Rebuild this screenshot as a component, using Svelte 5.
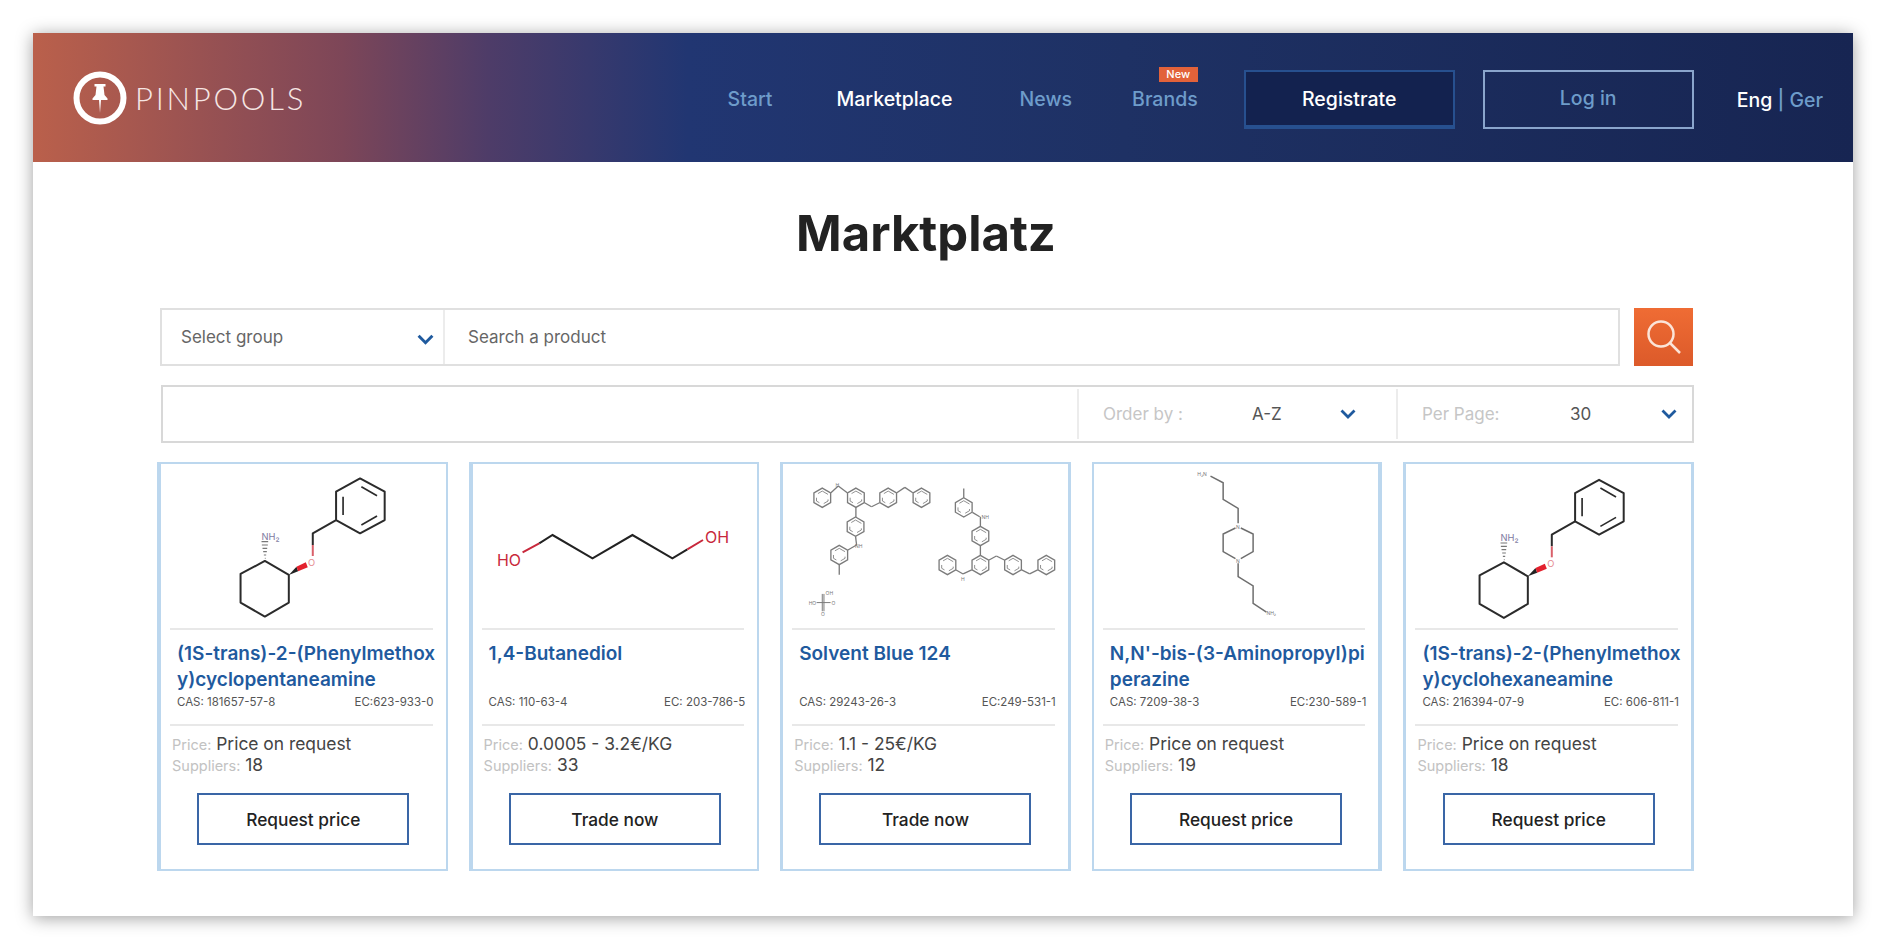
<script>
  const products = [
    { lines: ['(1S-trans)-2-(Phenylmethox', 'y)cyclopentaneamine'], cas: 'CAS: 181657-57-8', ec: 'EC:623-933-0', price: 'Price on request', suppliers: 18, action: 'Request price', mol: 'benzyl', box: '33 42 855 492', edge: 'left' },
    { lines: ['1,4-Butanediol'], cas: 'CAS: 110-63-4', ec: 'EC: 203-786-5', price: '0.0005 - 3.2€/KG', suppliers: 33, action: 'Trade now', mol: 'diol', box: '6 42 855 492', edge: 'left' },
    { lines: ['Solvent Blue 124'], cas: 'CAS: 29243-26-3', ec: 'EC:249-531-1', price: '1.1 - 25€/KG', suppliers: 12, action: 'Trade now', mol: 'blue', box: '39 42 855 492', edge: 'mid' },
    { lines: ["N,N'-bis-(3-Aminopropyl)pi", 'perazine'], cas: 'CAS: 7209-38-3', ec: 'EC:230-589-1', price: 'Price on request', suppliers: 19, action: 'Request price', mol: 'piperazine', box: '12 42 855 492', edge: 'right' },
    { lines: ['(1S-trans)-2-(Phenylmethox', 'y)cyclohexaneamine'], cas: 'CAS: 216394-07-9', ec: 'EC: 606-811-1', price: 'Price on request', suppliers: 18, action: 'Request price', mol: 'benzyl', box: '51 38 855 492', edge: 'mid' }
  ];

  const rings = [[157,143],[258,143],[355,143],[455,143],[257,230],[208,315],[582,172],[632,258],[632,345],[533,345],[730,345],[830,345]];
  const links = [
    [183,128,205,108],[205,108,232,128],[284,158,305,170],[305,170,329,158],[381,128,405,112],[405,112,429,128],
    [258,172,258,201],[257,259,260,285],[260,285,234,300],[208,344,208,374],[582,143,582,115],[608,187,630,200],[632,200,632,229],
    [632,287,632,316],[559,360,580,372],[580,372,606,360],[658,330,680,318],[680,318,704,330],[756,360,780,372],[780,372,804,360]
  ];

  function hex(cx, cy, r = 29) {
    const pts = [];
    for (let i = 0; i < 6; i++) {
      const a = (Math.PI / 3) * i - Math.PI / 2;
      pts.push(`${cx + r * Math.cos(a)},${cy + r * Math.sin(a)}`);
    }
    return pts.join(' ');
  }
</script>

{#snippet chevron()}
  <svg class="chev" viewBox="0 0 16 10" aria-hidden="true"><path d="M1.5 1.500 8 8l6.500-6.500" /></svg>
{/snippet}

{#snippet benzyl()}
  <g fill="none" stroke="#2b2b2b" stroke-width="6" stroke-linejoin="round">
    <polygon points="345,333 417,375 417,458 345,500 272,458 272,372" />
    <polygon points="631,85 705,125 705,210 631,250 559,210 559,125" />
    <path d="M580 140v55M635 110l47 27M635 225l47-27" stroke-width="5" />
    <path d="M489 285V250L559 210" />
    <path d="M489 318V285" stroke="#d9606a" />
    <path d="M345 325h2M342 315h7M340 305h11M338 295h14M336 285h18M335 275h20" stroke="#777" stroke-width="3.500" />
  </g>
  <polygon points="417,375 440,350 445,364" fill="#222" />
  <polygon points="440,350 468,337 474,352 445,364" fill="#e3202c" />
  <text x="475" y="347" class="atom" fill="#e58a90">O</text>
  <text x="335" y="270" class="atom" fill="#7d7aa0">NH₂</text>
{/snippet}

{#snippet diol()}
  <path d="M205 280 245 255 365 325 485 255 605 325 650 298" fill="none" stroke="#222" stroke-width="6" stroke-linejoin="miter" />
  <path d="M155 307 205 280M650 298 697 270" fill="none" stroke="#c8283c" stroke-width="6" />
  <text x="78" y="347" class="oh" fill="#c8283c">HO</text>
  <text x="703" y="279" class="oh" fill="#c8283c">OH</text>
{/snippet}

{#snippet blue()}
  <g class="soft" fill="none" stroke="#7b7b7b" stroke-width="4">
    {#each rings as r}
      <polygon points={hex(r[0], r[1])} />
      <polygon points={hex(r[0], r[1], 20)} stroke-width="2.500" stroke-dasharray="20 15" />
    {/each}
    {#each links as l}
      <line x1={l[0]} y1={l[1]} x2={l[2]} y2={l[3]} />
    {/each}
    <path d="M140 458h42M157 432v52M162 432v52" stroke-width="3" />
  </g>
  <text x="197" y="110" class="tiny">H</text>
  <text x="255" y="294" class="tiny">NH</text>
  <text x="635" y="208" class="tiny">NH</text>
  <text x="574" y="392" class="tiny">H</text>
  <text x="116" y="464" class="tiny">HO</text>
  <text x="167" y="434" class="tiny">OH</text>
  <text x="185" y="464" class="tiny">O</text>
  <text x="153" y="497" class="tiny">O</text>
{/snippet}

{#snippet piperazine()}
  <path class="soft" d="M362 78 400 98V148L445 175V220M445 340V380L490 408V460L530 487M437 234 400 252V305L437 326M453 234 490 252V305L453 326" fill="none" stroke="#6e6e6e" stroke-width="4.500" />
  <text x="322" y="79" class="tiny">H₂N</text>
  <text x="530" y="496" class="tiny">NH₂</text>
  <text x="439" y="236" class="tiny">N</text>
  <text x="439" y="338" class="tiny">N</text>
{/snippet}

<div class="panel">
  <header class="top">
    <a class="logo" href="#home">
      <svg class="mark" viewBox="0 0 54 54" aria-hidden="true">
        <circle cx="27" cy="27" r="23.5" fill="none" stroke="#fff" stroke-width="6" />
        <path d="M21.500 13h11v2.500h-2l1 8.500 3 3.500v1.500h-6.500l-1 13-1-13h-6.500v-1.500l3-3.500 1-8.500h-2z" fill="#fff" />
      </svg>
      <span class="wordmark">PINPOOLS</span>
    </a>
    <nav class="nav">
      <div class="links">
        <a href="#start">Start</a>
        <a href="#market" class="on">Marketplace</a>
        <a href="#news">News</a>
        <a href="#brands" class="brands">Brands<span class="badge">New</span></a>
      </div>
      <div class="auth">
        <a href="#reg" class="btn reg">Registrate</a>
        <a href="#login" class="btn login">Log in</a>
      </div>
      <div class="lang"><b>Eng</b> | Ger</div>
    </nav>
  </header>

  <main class="body">
    <h1>Marktplatz</h1>

    <div class="search">
      <div class="bar">
        <div class="group"><span>Select group</span>{@render chevron()}</div>
        <div class="query">Search a product</div>
      </div>
      <button class="go" aria-label="Search">
        <svg viewBox="0 0 36 36" aria-hidden="true">
          <circle cx="15" cy="15" r="12.500" />
          <path d="m24 24 10 10" />
        </svg>
      </button>
    </div>

    <div class="filters">
      <div class="spacer"></div>
      <div class="filter order"><span class="lab">Order by :</span><span class="val">A-Z</span>{@render chevron()}</div>
      <div class="filter per"><span class="lab">Per Page:</span><span class="val">30</span>{@render chevron()}</div>
    </div>

    <div class="grid">
      {#each products as p}
        <article class="card {p.edge}">
          <svg class="mol" viewBox={p.box} aria-hidden="true">
            {#if p.mol === 'benzyl'}{@render benzyl()}
            {:else if p.mol === 'diol'}{@render diol()}
            {:else if p.mol === 'blue'}{@render blue()}
            {:else}{@render piperazine()}{/if}
          </svg>
          <hr />
          <h2>{#each p.lines as l}<span>{l}</span>{/each}</h2>
          <div class="ids"><span>{p.cas}</span><span>{p.ec}</span></div>
          <hr class="second" />
          <p class="info"><span class="k">Price:</span> {p.price}</p>
          <p class="info"><span class="k">Suppliers:</span> {p.suppliers}</p>
          <a class="cta" href="#item">{p.action}</a>
        </article>
      {/each}
    </div>
  </main>
</div>

<style>
  :global(body) {
    margin: 0;
    background: #fff;
    font-family: Inter, "Liberation Sans", sans-serif;
  }
  a { text-decoration: none; color: inherit; }
  .panel {
    margin: 33px 34px 33px 33px;
    height: 883px;
    background: #fff;
    box-shadow: 0 2px 16px rgba(0, 0, 0, 0.38);
  }
  .top {
    height: 129px;
    display: flex;
    align-items: center;
    justify-content: space-between;
    padding: 0 30px 0 40px;
    background: linear-gradient(90deg, #ba604b 0%, #7d4658 17%, #4e3c68 25%, #213672 36%, #1e3164 60%, #172552 100%);
  }
  .logo { display: flex; align-items: center; gap: 8px; }
  .mark { width: 54px; height: 54px; }
  .wordmark {
    font-family: Lato, sans-serif;
    font-weight: 300;
    font-size: 31px;
    letter-spacing: 2.800px;
    color: #f6e6e4;
  }
  .nav { display: flex; align-items: center; margin-top: 4px; font-size: 19.500px; font-weight: 500; color: #6e9cca; }
  .links { display: flex; gap: 65px; margin-top: -2px; }
  .on { color: #fff; margin: 0 2px 0 -1px; }
  .brands { position: relative; margin-left: -5px; }
  .badge {
    position: absolute;
    right: 0;
    top: -20px;
    width: 39px;
    height: 15px;
    background: #e2623a;
    color: #fff;
    font-size: 11px;
    line-height: 15px;
    text-align: center;
  }
  .auth { display: flex; gap: 28px; margin: 0 43px 0 46px; }
  .btn {
    width: 211px;
    height: 59px;
    box-sizing: border-box;
    display: flex;
    align-items: center;
    justify-content: center;
  }
  .reg {
    background: #13224f;
    border: 2px solid #27508f;
    border-bottom-width: 4px;
    color: #fff;
  }
  .login { border: 2px solid #8aa5cc; padding-bottom: 3px; }
  .lang b { color: #fff; font-weight: 500; }

  .body { padding: 0 159px 0 125px; }
  h1 {
    margin: 42px 0 44px;
    text-align: center;
    font-size: 49px;
    line-height: 60px;
    font-weight: 700;
    color: #222;
  }
  .search { display: flex; gap: 14px; margin: 0 1px 0 2px; height: 58px; }
  .bar {
    flex: 1;
    display: flex;
    box-sizing: border-box;
    border: 2px solid #e0e0e0;
    font-size: 17px;
    color: #666;
  }
  .group {
    width: 283px;
    box-sizing: border-box;
    border-right: 2px solid #ececec;
    padding: 0 9px 0 19px;
    display: flex;
    align-items: center;
    justify-content: space-between;
  }
  .group .chev { width: 17px; height: 11px; margin-top: 4px; }
  .query { padding-left: 23px; display: flex; align-items: center; }
  .go {
    width: 59px;
    padding: 0;
    border: 0;
    background: linear-gradient(180deg, #ef6c34, #dc5a2a);
    display: flex;
    align-items: center;
    justify-content: center;
  }
  .go svg { width: 36px; height: 36px; fill: none; stroke: #fbe4d8; stroke-width: 2.500; }
  .chev { width: 16px; height: 10px; fill: none; stroke: #1f5a9e; stroke-width: 2.800; flex: none; }

  .filters {
    display: flex;
    height: 58px;
    margin: 19px 0 19px 3px;
    box-sizing: border-box;
    border: 2px solid #d8d8d8;
    font-size: 17px;
  }
  .spacer { flex: 1; }
  .filter {
    box-sizing: border-box;
    margin: 2px 0;
    border-left: 2px solid #ececec;
    display: flex;
    align-items: center;
    padding-left: 24px;
    color: #555;
  }
  .order { width: 319px; }
  .per { width: 296px; }
  .lab { color: #c6c6c6; width: 149px; flex: none; }
  .per .lab { width: 148px; }
  .val { flex: 1; }
  .filter .chev { margin-right: 40px; }
  .per .chev { margin-right: 15px; }

  .grid { display: grid; grid-template-columns: repeat(5, 1fr); gap: 21px; margin-left: -1px; }
  .card {
    box-sizing: border-box;
    height: 409px;
    border: 2px solid #bcd7ee;
  }
  .left { border-left-width: 4px; }
  .mid { border-left-width: 3px; border-right-width: 3px; }
  .right { border-right-width: 4px; }
  .mol { display: block; width: 100%; height: 164px; }
  .soft { filter: blur(0.5px); }
  .atom { font-family: Inter, sans-serif; font-size: 28px; }
  .oh { font-family: Inter, sans-serif; font-size: 48px; }
  .tiny { font-family: Inter, sans-serif; font-size: 15px; fill: #777; }
  hr { border: 0; height: 2px; background: #e8e8e8; margin: 0 13px 0 9px; }
  .second { margin-top: 13px; margin-bottom: 8px; }
  h2 {
    margin: 11px 0 0;
    height: 51px;
    padding-left: 16px;
    font-size: 19px;
    line-height: 26px;
    font-weight: 600;
    color: #1f5a9e;
    white-space: nowrap;
  }
  h2 span { display: block; }
  .ids {
    display: flex;
    justify-content: space-between;
    padding: 0 12px 0 16px;
    height: 18px;
    line-height: 18px;
    margin-top: 1px;
    font-size: 11.500px;
    color: #555;
  }
  .info { margin: 0 0 0 11px; font-size: 17.400px; line-height: 20px; color: #444; }
  .k { color: #c2c2c2; font-size: 14.500px; }
  .cta {
    display: flex;
    align-items: center;
    justify-content: center;
    width: 212px;
    height: 52px;
    box-sizing: border-box;
    margin: 17px auto 0;
    border: 2px solid #3a66a6;
    font-size: 17.300px;
    font-weight: 500;
    color: #222;
  }
</style>
